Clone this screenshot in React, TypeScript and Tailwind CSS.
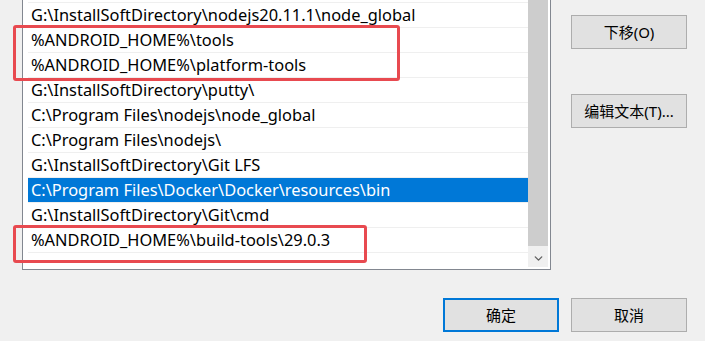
import { ChevronDown } from 'lucide-react'

const rows = [
  '%MAVEN_HOME%\\bin',
  'G:\\InstallSoftDirectory\\nodejs20.11.1\\node_global',
  '%ANDROID_HOME%\\tools',
  '%ANDROID_HOME%\\platform-tools',
  'G:\\InstallSoftDirectory\\putty\\',
  'C:\\Program Files\\nodejs\\node_global',
  'C:\\Program Files\\nodejs\\',
  'G:\\InstallSoftDirectory\\Git LFS',
  'C:\\Program Files\\Docker\\Docker\\resources\\bin',
  'G:\\InstallSoftDirectory\\Git\\cmd',
  '%ANDROID_HOME%\\build-tools\\29.0.3',
]

const selected = 8
const font = { fontFamily: '"Noto Sans", "Noto Sans CJK SC", sans-serif' }

function WinButton({ label, primary }: { label: string; primary?: boolean }) {
  return <button
    className={`flex h-[34px] w-[116px] items-center justify-center bg-[#e1e1e1] text-[15px] text-black ${primary ? 'border-2 border-[#0078d7]' : 'border border-[#adadad]'}`}
  >
    {label}
  </button>
}

export default function App() {
  return <div className="relative h-[341px] w-[705px] overflow-hidden bg-[#f0f0f0]" style={font}>
    <div className="flex">
      <div className="ml-[22px] mt-[-23px] flex h-[293px] w-[529px] border border-[#828790] bg-white">
        <div className="flex-1 overflow-hidden pl-[5px]">
          {rows.map((text, i) => <div
            key={text}
            className={`flex h-[25px] items-center border-b border-[#efefef] pl-[3px] text-[16.4px] leading-none whitespace-nowrap ${i === selected ? 'bg-[#0078d7] text-white' : 'text-black'}`}
          >
            {text}
          </div>)}
        </div>
        <div className="mr-[2px] flex w-[20px] flex-col bg-[#f0f0f0]">
          <div className="flex-1 bg-[#cdcdcd]" />
          <div className="flex h-[21px] items-center justify-center pt-[3px]">
            <ChevronDown size={13} strokeWidth={2.5} className="text-[#606060]" />
          </div>
          <div className="h-[2px] bg-white" />
        </div>
      </div>
      <div className="ml-[20px] mt-[15px] flex flex-col gap-[45px]">
        <WinButton label="下移(O)" />
        <WinButton label="编辑文本(T)..." />
      </div>
    </div>
    <div className="mt-[28px] flex justify-end gap-[12px] pr-[18px]">
      <WinButton label="确定" primary />
      <WinButton label="取消" />
    </div>

    <div className="absolute left-[13px] top-[25px] h-[56px] w-[387px] rounded-[3px] border-[3px] border-[#e84a50]" />
    <div className="absolute left-[13px] top-[225px] h-[38px] w-[354px] rounded-[3px] border-[3px] border-[#e84a50]" />
  </div>
}
